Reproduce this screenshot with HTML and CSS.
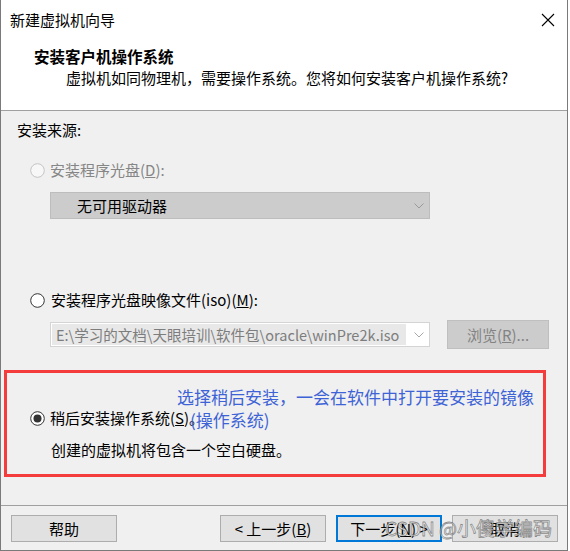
FILE: index.html
```html
<!DOCTYPE html>
<html lang="zh-CN">
<head>
<meta charset="utf-8">
<title>新建虚拟机向导</title>
<link rel="stylesheet" href="styles.css">
</head>
<body>
<div class="window">
  <div class="header">
    <div class="titlebar">
      <span class="title">新建虚拟机向导</span>
      <svg class="close" width="14" height="14" viewBox="0 0 14 14"><path d="M1 1L13 13M13 1L1 13" stroke="#000" stroke-width="1.1" fill="none"/></svg>
    </div>
    <div class="heading">安装客户机操作系统</div>
    <div class="subtitle">虚拟机如同物理机，需要操作系统。您将如何安装客户机操作系统?</div>
  </div>
  <div class="body">
    <div class="source-label">安装来源:</div>
    <div class="radio-row disabled first">
      <svg class="radio" width="15" height="15" viewBox="0 0 15 15"><circle cx="7.5" cy="7.5" r="6.8" fill="#f7f7f7" stroke="#c4c4c4" stroke-width="1"/></svg>
      <span>安装程序光盘(<u>D</u>):</span>
    </div>
    <div class="combo combo-disabled">
      <span class="combo-text">无可用驱动器</span>
      <svg class="chev" width="10" height="6" viewBox="0 0 10 6"><path d="M0.5 0.5L5 5L9.5 0.5" stroke="#9a9a9a" fill="none"/></svg>
    </div>
    <div class="radio-row second">
      <svg class="radio" width="15" height="15" viewBox="0 0 15 15"><circle cx="7.5" cy="7.5" r="6.8" fill="#fff" stroke="#333" stroke-width="1"/></svg>
      <span>安装程序光盘映像文件(iso)(<u>M</u>):</span>
    </div>
    <div class="iso-row">
      <div class="combo combo-iso">
        <span class="iso-text">E:\学习的文档\天眼培训\软件包\oracle\winPre2k.iso</span>
        <svg class="chev" width="10" height="6" viewBox="0 0 10 6"><path d="M0.5 0.5L5 5L9.5 0.5" stroke="#a8a8a8" fill="none"/></svg>
      </div>
      <div class="btn btn-disabled browse">浏览(<u>R</u>)...</div>
    </div>
    <div class="later-box">
      <div class="note">
        <div>选择稍后安装，一会在软件中打开要安装的镜像</div>
        <div class="note-2">(操作系统)</div>
      </div>
      <div class="radio-row third">
        <svg class="radio" width="15" height="15" viewBox="0 0 15 15"><circle cx="7.5" cy="7.5" r="6.8" fill="#fff" stroke="#333" stroke-width="1"/><circle cx="7.5" cy="7.5" r="4" fill="#333"/></svg>
        <span>稍后安装操作系统(<u>S</u>)。</span>
      </div>
      <div class="desc">创建的虚拟机将包含一个空白硬盘。</div>
    </div>
  </div>
  <div class="footer">
    <div class="btn">帮助</div>
    <div class="spacer"></div>
    <div class="btn">&lt; 上一步(<u>B</u>)</div>
    <div class="btn btn-default">下一步(<u>N</u>) &gt;</div>
    <div class="btn">取消</div>
    <div class="watermark">CSDN @小傻学编码</div>
  </div>
</div>
</body>
</html>
```

FILE: styles.css
```css
* { box-sizing: border-box; }
html, body { margin: 0; padding: 0; background: #fff; }
body {
  font-family: "Noto Sans CJK SC", "Noto Sans", sans-serif;
  font-size: 15px;
  color: #000;
}
.window {
  width: 568px;
  height: 551px;
  border-left: 1px solid #7a7a7a;
  border-right: 1px solid #7a7a7a;
  border-bottom: 1px solid #7a7a7a;
  background: #f0f0f0;
  display: flex;
  flex-direction: column;
}
.header {
  background: #fff;
  height: 111px;
  border-bottom: 1px solid #a0a0a0;
}
.titlebar {
  height: 40px;
  display: flex;
  align-items: center;
  justify-content: space-between;
  padding-left: 9px;
  padding-right: 12px;
}
.title { line-height: 20px; }
.close { display: block; }
.heading {
  margin: 6px 0 0 33px;
  font-weight: bold;
  font-size: 15.5px;
  line-height: 20px;
}
.subtitle {
  margin: 2px 0 0 65px;
  line-height: 20px;
}
.body {
  height: 394px;
  padding-top: 9px;
}
.source-label {
  margin-left: 16px;
  line-height: 20px;
}
.radio-row {
  display: flex;
  align-items: center;
  gap: 5px;
  height: 20px;
  line-height: 20px;
  margin-left: 29px;
}
.radio { display: block; flex: none; }
.radio-row.first { margin-top: 20px; }
.radio-row.second { margin-top: 71px; }
.radio-row.second span { margin-left: 1px; }
.disabled { color: #868686; }
.combo {
  display: flex;
  align-items: center;
  width: 380px;
  position: relative;
}
.combo-disabled {
  margin: 12px 0 0 49px;
  height: 27px;
  background: #cccccc;
  border: 1px solid #bdbdbd;
  padding-left: 26px;
}
.combo-text { line-height: 20px; flex: 1; }
.chev { display: block; margin-right: 5px; flex: none; }
.iso-row {
  display: flex;
  align-items: center;
  margin: 10px 0 0 49px;
  height: 29px;
}
.combo-iso {
  height: 25px;
  background: #fff;
  border: 1px solid #d4d4d4;
  padding: 1px;
}
.iso-text {
  flex: none;
  width: 354px;
  height: 21px;
  line-height: 21px;
  background: #e8e8e8;
  color: #7d7d7d;
  padding-left: 4px;
  font-size: 14.5px;
  white-space: nowrap;
  overflow: hidden;
}
.combo-iso .chev { margin-left: 8px; }
.btn {
  width: 106px;
  height: 27px;
  display: flex;
  align-items: center;
  justify-content: center;
  background: #e1e1e1;
  border: 1px solid #adadad;
  line-height: 20px;
  flex: none;
}
.btn-disabled {
  background: #cccccc;
  border-color: #bfbfbf;
  color: #838383;
}
.browse {
  width: 102px;
  height: 29px;
  margin-left: 17px;
}
.later-box {
  position: relative;
  margin: 21px 0 0 3px;
  width: 542px;
  height: 107px;
  border: 3px solid #f53c3c;
  padding-top: 35px;
}
.radio-row.third { margin-left: 23px; }
.desc {
  margin: 12px 0 0 44px;
  line-height: 20px;
}
.note {
  position: absolute;
  left: 170px;
  top: 12px;
  color: #3d63d6;
  font-size: 17px;
  line-height: 23px;
  white-space: nowrap;
}
.note-2 { padding-left: 13px; }
.footer {
  position: relative;
  flex: 1;
  border-top: 1px solid #a0a0a0;
  display: flex;
  align-items: flex-start;
  gap: 10px;
  padding: 9px 9px 0 10px;
}
.spacer { flex: 1; }
.btn-default {
  border: 2px solid #0078d7;
}
.watermark {
  position: absolute;
  left: 384px;
  top: 10px;
  font-size: 19px;
  line-height: 24px;
  color: rgba(255,255,255,0.7);
  -webkit-text-stroke: 0.8px rgba(70,70,70,0.6);
  white-space: nowrap;
  pointer-events: none;
}
```
